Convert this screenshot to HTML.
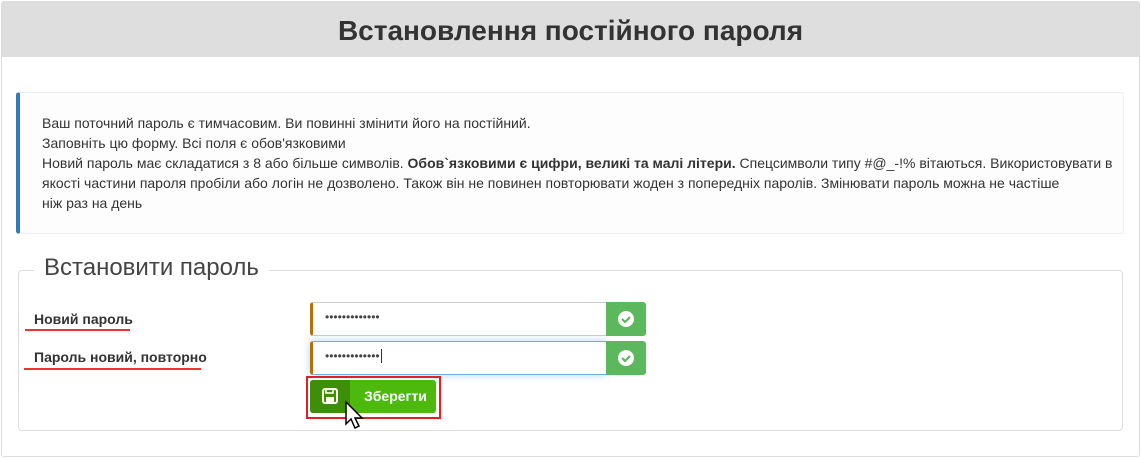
<!DOCTYPE html>
<html><head><meta charset="utf-8"><style>
body{margin:0;width:1141px;height:458px;background:#fff;font-family:"Liberation Sans",sans-serif;color:#333;position:relative;overflow:hidden}
.panel{position:absolute;left:1px;top:1px;width:1137px;height:454px;border:1px solid #ddd;border-radius:3px}
.hdr{position:absolute;left:0;top:0;width:1137px;height:55px;background:#dedede;text-align:center;font-size:28px;font-weight:bold;line-height:57px;color:#333}
.alert{position:absolute;left:16px;top:92px;width:1103px;height:140px;border:1px solid #eee;border-left:4px solid #337ab7;border-radius:3px;background:#fdfdfd;font-size:14px;line-height:20px;color:#333}
.alert div{position:absolute;left:22px;top:20px;width:1080px;white-space:nowrap}
.fs{position:absolute;left:18px;top:270px;width:1103px;height:159px;border:1px solid #ddd;border-radius:4px}
.lg{position:absolute;left:34px;top:253px;background:#fff;padding:0 10px;font-size:24px;color:#444;line-height:30px}
.lbl{position:absolute;font-weight:bold;font-size:14px;color:#333}
.ul{position:absolute;height:2px;background:#e33}
.inp{position:absolute;left:310px;width:293px;height:32px;border:1px solid #ccc;border-left:3px solid #b26f0a;border-radius:3px 0 0 3px;background:#fff}
.inp span{position:absolute;left:12px;top:7px;font-size:12px;letter-spacing:0px;color:#444}
.add{position:absolute;left:606px;width:40px;height:34px;background:#5cb85c;border-radius:0 3px 3px 0}
</style></head><body>
<div class="panel"><div class="hdr">Встановлення постійного пароля</div></div>
<div class="alert"><div>Ваш поточний пароль є тимчасовим. Ви повинні змінити його на постійний.<br>Заповніть цю форму. Всі поля є обов'язковими<br>Новий пароль має складатися з 8 або більше символів. <b>Обов`язковими є цифри, великі та малі літери.</b> Спецсимволи типу #@_-!% вітаються. Використовувати в<br>якості частини пароля пробіли або логін не дозволено. Також він не повинен повторювати жоден з попередніх паролів. Змінювати пароль можна не частіше<br>ніж раз на день</div></div>
<div class="fs"></div>
<div class="lg">Встановити пароль</div>
<div class="lbl" style="left:34px;top:311px">Новий пароль</div>
<div class="ul" style="left:25px;top:329px;width:105px"></div>
<div class="lbl" style="left:34px;top:349px">Пароль новий, повторно</div>
<div class="ul" style="left:24px;top:368px;width:177px"></div>
<div class="inp" style="top:302px"><span>•••••••••••••</span></div>
<div class="add" style="top:302px"><svg width="40" height="34"><circle cx="20" cy="17" r="8" fill="#fff"/><path d="M16 17l3 3 5-5" stroke="#5cb85c" stroke-width="2.2" fill="none"/></svg></div>
<div class="inp" style="top:341px;border-color:#66afe9 #66afe9 #66afe9 #b26f0a;box-shadow:0 0 8px rgba(102,175,233,.5)"><span>•••••••••••••<span style="position:static;border-left:1px solid #333;margin-left:1px"></span></span></div>
<div class="add" style="top:341px"><svg width="40" height="34"><circle cx="20" cy="17" r="8" fill="#fff"/><path d="M16 17l3 3 5-5" stroke="#5cb85c" stroke-width="2.2" fill="none"/></svg></div>
<div style="position:absolute;left:306px;top:376px;width:131px;height:39px;border:2px solid #e32020"></div>
<div style="position:absolute;left:310px;top:380px;width:126px;height:33px;background:#4cb90c;border-radius:3px;overflow:hidden">
<div style="position:absolute;left:0;top:0;width:40px;height:33px;background:#3d8e08"></div>
<svg style="position:absolute;left:12px;top:8px" width="16" height="16"><rect x="1" y="1" width="14" height="14" rx="2" fill="none" stroke="#ffe" stroke-width="2"/><rect x="4" y="1" width="7" height="4" fill="none" stroke="#ffe" stroke-width="1.6"/><rect x="4" y="9" width="8" height="5" fill="#ffe"/></svg>
<div style="position:absolute;left:54px;top:8px;color:#fff;font-size:14px;font-weight:bold">Зберегти</div></div>
<svg style="position:absolute;left:344px;top:400px" width="22" height="32"><path d="M2 2v22l5-5 4 9 4-2-4-8h7z" fill="#fff" stroke="#000" stroke-width="1.5"/></svg>
</body></html>
